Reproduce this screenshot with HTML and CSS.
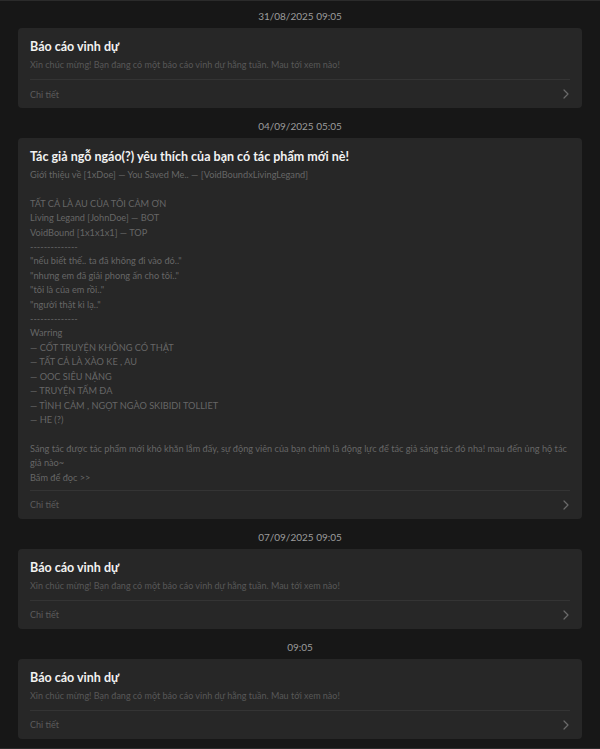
FILE: index.html
```html
<!DOCTYPE html>
<html lang="vi">
<head>
  <meta charset="UTF-8">
  <meta name="viewport" content="width=device-width, initial-scale=1.0">
  <title>Thông báo</title>
  <link rel="stylesheet" href="styles.css">
</head>
<body>

  <div class="feed">

    <div class="stamp">31/08/2025 09:05</div>
    <div class="notice">
      <div class="notice-title">Báo cáo vinh dự</div>
      <div class="notice-text">Xin chúc mừng! Bạn đang có một báo cáo vinh dự hằng tuần. Mau tới xem nào!</div>
      <div class="notice-foot">
        <span>Chi tiết</span>
        <svg class="chevron" width="6" height="10" viewBox="0 0 6 10"><path d="M1 1l4 4-4 4" fill="none" stroke="currentColor" stroke-width="1.2" stroke-linecap="round" stroke-linejoin="round"/></svg>
      </div>
    </div>

    <div class="stamp">04/09/2025 05:05</div>
    <div class="notice">
      <div class="notice-title">Tác giả ngỗ ngáo(?) yêu thích của bạn có tác phẩm mới nè!</div>
      <div class="notice-text notice-long">Giới thiệu về [1xDoe] — You Saved Me.. — [VoidBoundxLivingLegand]

TẤT CẢ LÀ AU CỦA TÔI CẢM ƠN
Living Legand [JohnDoe] — BOT
VoidBound [1x1x1x1] — TOP
--------------
"nếu biết thế.. ta đã không đi vào đó.."
"nhưng em đã giải phong ấn cho tôi.."
"tôi là của em rồi.."
"người thật kì lạ.."
--------------
Warring
— CỐT TRUYỆN KHÔNG CÓ THẬT
— TẤT CẢ LÀ XÀO KE , AU
— OOC SIÊU NẶNG
— TRUYỆN TẤM ĐA
— TÌNH CẢM , NGỌT NGÀO SKIBIDI TOLLIET
— HE (?)

Sáng tác được tác phẩm mới khó khăn lắm đấy, sự động viên của bạn chính là động lực để tác giả sáng tác đó nha! mau đến ủng hộ tác giả nào~
Bấm để đọc &gt;&gt;</div>
      <div class="notice-foot">
        <span>Chi tiết</span>
        <svg class="chevron" width="6" height="10" viewBox="0 0 6 10"><path d="M1 1l4 4-4 4" fill="none" stroke="currentColor" stroke-width="1.2" stroke-linecap="round" stroke-linejoin="round"/></svg>
      </div>
    </div>

    <div class="stamp">07/09/2025 09:05</div>
    <div class="notice">
      <div class="notice-title">Báo cáo vinh dự</div>
      <div class="notice-text">Xin chúc mừng! Bạn đang có một báo cáo vinh dự hằng tuần. Mau tới xem nào!</div>
      <div class="notice-foot">
        <span>Chi tiết</span>
        <svg class="chevron" width="6" height="10" viewBox="0 0 6 10"><path d="M1 1l4 4-4 4" fill="none" stroke="currentColor" stroke-width="1.2" stroke-linecap="round" stroke-linejoin="round"/></svg>
      </div>
    </div>

    <div class="stamp">09:05</div>
    <div class="notice">
      <div class="notice-title">Báo cáo vinh dự</div>
      <div class="notice-text">Xin chúc mừng! Bạn đang có một báo cáo vinh dự hằng tuần. Mau tới xem nào!</div>
      <div class="notice-foot">
        <span>Chi tiết</span>
        <svg class="chevron" width="6" height="10" viewBox="0 0 6 10"><path d="M1 1l4 4-4 4" fill="none" stroke="currentColor" stroke-width="1.2" stroke-linecap="round" stroke-linejoin="round"/></svg>
      </div>
    </div>

  </div>

</body>
</html>
```

FILE: styles.css
```css
* {
  box-sizing: border-box;
}

html,
body {
  margin: 0;
  height: 100%;
}

body {
  font-family: Lato, "Noto Sans", sans-serif;
  background: #171717;
  border-top: 1px solid #2b2b2b;
  border-bottom: 1px solid #2b2b2b;
}

.feed {
  padding: 0 18px 6px;
}

/* thời gian hiển thị giữa các thông báo */
.stamp {
  text-align: center;
  font-size: 10px;
  line-height: 14px;
  color: #9c9c9c;
  padding: 11px 0 5px;
}

.stamp:first-child {
  padding-top: 8px;
}

.notice {
  background: #272727;
  border-radius: 4px;
  padding: 10px 12px 0;
}

.notice-title {
  font-size: 12.5px;
  font-weight: 700;
  line-height: 18px;
  color: #f2f2f2;
}

.notice-text {
  margin-top: 2px;
  font-size: 9px;
  line-height: 14px;
  color: #585858;
}

.notice-long {
  white-space: pre-line;
  font-size: 9.2px;
  line-height: 14.4px;
  color: #666;
}

.notice-foot {
  margin-top: 7px;
  border-top: 1px solid #343434;
  height: 29px;
  display: flex;
  align-items: center;
  justify-content: space-between;
  font-size: 9px;
  color: #5c5c5c;
}

.notice-long + .notice-foot {
  margin-top: 5px;
}

.chevron {
  color: #6a6a6a;
  margin-right: 1px;
}
```
